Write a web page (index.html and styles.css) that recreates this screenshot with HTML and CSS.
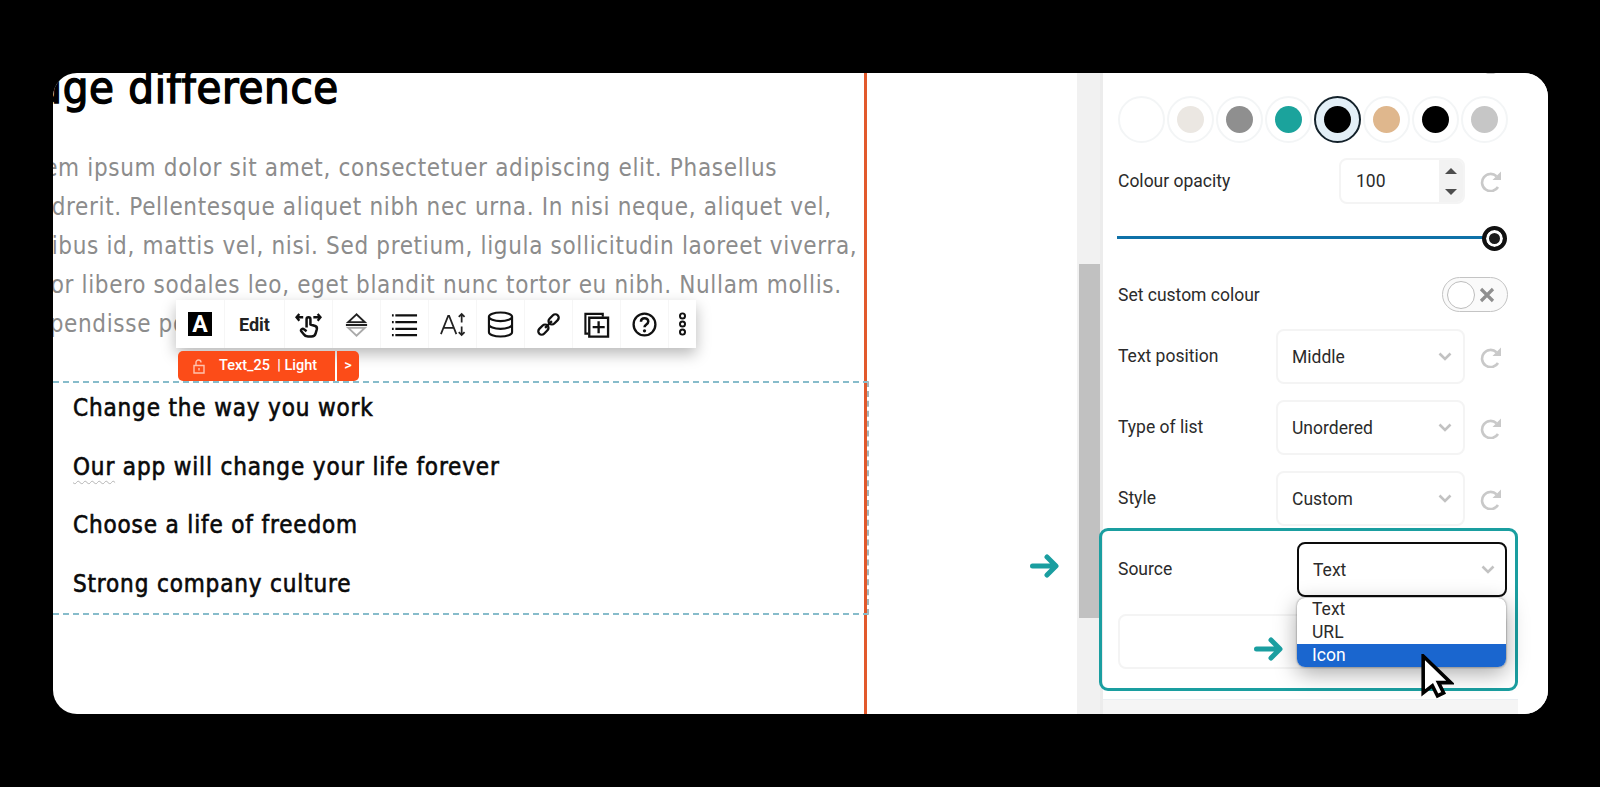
FILE: index.html
```html
<!DOCTYPE html>
<html lang="en">
<head>
    <meta charset="UTF-8">
    <title>Text list settings</title>
    <link rel="stylesheet" href="styles.css">
</head>
<body>
    <svg class="defs" width="0" height="0">
        <symbol id="reset" viewBox="0 0 22 22">
            <path d="M16.5 6.2A8.6 8.6 0 1 0 18 17" fill="none" stroke="currentColor" stroke-width="2.6"/>
            <path d="M21 1.5V10h-8.5z" fill="currentColor"/>
        </symbol>
        <symbol id="chevron" viewBox="0 0 14 9">
            <path d="M1.5 1.5L7 7l5.5-5.5" fill="none" stroke="currentColor" stroke-width="2.6"/>
        </symbol>
        <symbol id="arrow" viewBox="0 0 30 24">
            <path d="M2.5 12h23M17 3l9 9-9 9" fill="none" stroke="currentColor" stroke-width="5" stroke-linecap="round" stroke-linejoin="round"/>
        </symbol>
    </svg>

    <div class="frame">
        <main class="canvas">
            <div class="page">
                <h1>Make a huge difference</h1>
                <p class="lede">
                    <span>Lorem ipsum dolor sit amet, consectetuer adipiscing elit. Phasellus</span>
                    <span>hendrerit. Pellentesque aliquet nibh nec urna. In nisi neque, aliquet vel,</span>
                    <span>dapibus id, mattis vel, nisi. Sed pretium, ligula sollicitudin laoreet viverra,</span>
                    <span>tortor libero sodales leo, eget blandit nunc tortor eu nibh. Nullam mollis.</span>
                    <span>Suspendisse porttitor</span>
                </p>
                <ul class="benefits">
                    <li>Change the way you work</li>
                    <li><span class="typo">Our</span> app will change your life forever</li>
                    <li>Choose a life of freedom</li>
                    <li>Strong company culture</li>
                </ul>
            </div>
        </main>

        <div class="scrollbar"><div class="thumb"></div></div>

        <aside class="panel">
            <div class="clipped-reset"><svg class="reset"><use href="#reset"/></svg></div>
            <div class="swatches">
                <span class="swatch"></span>
                <span class="swatch"><i class="c-sand"></i></span>
                <span class="swatch"><i class="c-gray"></i></span>
                <span class="swatch"><i class="c-teal"></i></span>
                <span class="swatch active"><i class="c-black"></i></span>
                <span class="swatch"><i class="c-tan"></i></span>
                <span class="swatch"><i class="c-black"></i></span>
                <span class="swatch"><i class="c-silver"></i></span>
            </div>

            <div class="row opacity-row">
                <label>Colour opacity</label>
                <div class="number">
                    <span class="number-value">100</span>
                    <span class="stepper"><b class="up"></b><b class="down"></b></span>
                </div>
                <svg class="reset"><use href="#reset"/></svg>
            </div>

            <div class="slider"><span class="knob"></span></div>

            <div class="toggle-row">
                <label>Set custom colour</label>
                <div class="toggle">
                    <span class="toggle-dot"></span>
                    <svg class="toggle-x" viewBox="0 0 16 16"><path d="M2 2l12 12M14 2L2 14" stroke="currentColor" stroke-width="3.2" fill="none"/></svg>
                </div>
            </div>

            <div class="row select-row">
                <label>Text position</label>
                <div class="select"><span>Middle</span><svg class="chevron"><use href="#chevron"/></svg></div>
                <svg class="reset"><use href="#reset"/></svg>
            </div>
            <div class="row select-row">
                <label>Type of list</label>
                <div class="select"><span>Unordered</span><svg class="chevron"><use href="#chevron"/></svg></div>
                <svg class="reset"><use href="#reset"/></svg>
            </div>
            <div class="row select-row">
                <label>Style</label>
                <div class="select"><span>Custom</span><svg class="chevron"><use href="#chevron"/></svg></div>
                <svg class="reset"><use href="#reset"/></svg>
            </div>

            <section class="source-box">
                <div class="source-row">
                    <label>Source</label>
                    <div class="select focused"><span>Text</span><svg class="chevron"><use href="#chevron"/></svg></div>
                </div>
                <div class="source-input"></div>
                <ul class="dropdown">
                    <li>Text</li>
                    <li>URL</li>
                    <li class="hover">Icon</li>
                </ul>
            </section>
            <div class="panel-foot"></div>
        </aside>

        <!-- floating toolbar over the text -->
        <div class="toolbar">
            <div class="tool tool-style"><span class="style-a">A</span></div>
            <div class="tool tool-edit">Edit</div>
            <div class="tool">
                <svg viewBox="0 0 28 28" class="ico"><path d="M1.500 6.500h7M4.500 3L1.500 6.500 4.500 10M19 6.500h7.500M23.500 3l3 3.500-3 3.500" fill="none" stroke="#111" stroke-width="2.400"/><path d="M12 17V8.500a2 2 0 0 1 4 0V14l5 1.600c1.600.6 2 1.800 1.600 3.400l-1.200 4.200c-.5 2-2 3.300-4.400 3.300h-3.500c-2 0-3.400-.8-4.400-2.400L6.500 21c-1-1.800 1.300-3.300 2.800-2l2.700 2" fill="none" stroke="#111" stroke-width="2.600" stroke-linejoin="round"/></svg>
            </div>
            <div class="tool">
                <svg viewBox="0 0 28 28" class="ico"><path d="M14 3.500L5.500 11.500h17z" fill="none" stroke="#222" stroke-width="2"/><path d="M3 14.500h22" stroke="#222" stroke-width="2.200"/><path d="M5.500 17.500L14 25.500l8.500-8z" fill="none" stroke="#aaa" stroke-width="2"/></svg>
            </div>
            <div class="tool">
                <svg viewBox="0 0 28 28" class="ico"><path d="M4.500 4.500H27M4.500 11.500H27M4.500 18.500H27M4.500 25H27" stroke="#111" stroke-width="2.200"/><path d="M1 4.500h1.800M1 11.500h1.800M1 18.500h1.800M1 25h1.800" stroke="#111" stroke-width="2.200"/></svg>
            </div>
            <div class="tool">
                <svg viewBox="0 0 28 28" class="ico"><path d="M2 24L9.500 5h1l7.500 19M5 17.500h10" fill="none" stroke="#222" stroke-width="1.800"/><path d="M23.500 12V3M20.500 6l3-3 3 3M23.500 16v9M20.500 22l3 3 3-3" fill="none" stroke="#222" stroke-width="1.800"/></svg>
            </div>
            <div class="tool">
                <svg viewBox="0 0 28 28" class="ico"><ellipse cx="14" cy="6" rx="12" ry="4.500" fill="none" stroke="#111" stroke-width="2.200"/><path d="M2 6v16c0 2.500 5.400 4.500 12 4.500s12-2 12-4.500V6M2 14c0 2.500 5.400 4.500 12 4.500s12-2 12-4.500" fill="none" stroke="#111" stroke-width="2.200"/></svg>
            </div>
            <div class="tool">
                <svg viewBox="0 0 28 28" class="ico"><g fill="none" stroke="#111" stroke-width="2.400" transform="rotate(-45 14 14)"><rect x="0.500" y="10.500" width="12" height="7" rx="3.500"/><rect x="15.500" y="10.500" width="12" height="7" rx="3.500"/><path d="M9 14h10"/></g></svg>
            </div>
            <div class="tool">
                <svg viewBox="0 0 28 28" class="ico"><path d="M5.500 23.500H2.500V3h18v3" fill="none" stroke="#111" stroke-width="2.200"/><path d="M6.500 7h19.500v19.500H6.500z" fill="none" stroke="#111" stroke-width="2.400"/><path d="M16.200 10.500v12.500M10 16.700h12.500" stroke="#111" stroke-width="2.400"/></svg>
            </div>
            <div class="tool">
                <svg viewBox="0 0 28 28" class="ico"><circle cx="14" cy="14" r="11.300" fill="none" stroke="#111" stroke-width="2.400"/><path d="M10.300 11.200c0-5 7.600-5 7.600-.2 0 3-3.900 3-3.900 5.800" fill="none" stroke="#111" stroke-width="2.600"/><circle cx="14" cy="20.600" r="1.700" fill="#111"/></svg>
            </div>
            <div class="tool tool-more">
                <svg viewBox="0 0 10 28" class="dots"><g fill="none" stroke="#111" stroke-width="2.200"><circle cx="5" cy="5" r="2.800"/><circle cx="5" cy="14" r="2.800"/><circle cx="5" cy="23" r="2.800"/></g></svg>
            </div>
        </div>

        <div class="tag">
            <span class="tag-main">
                <svg class="lock" viewBox="0 0 12 15"><path d="M3 6.500V3.500a2.500 2.500 0 0 1 5 0M1 6.500h10v7.500H1zM6 9v2.500" fill="none" stroke="#ffc2ad" stroke-width="1.400"/></svg>
                <span>Text_25 &nbsp;| Light</span>
            </span>
            <span class="tag-next">&gt;</span>
        </div>

        <svg class="note-arrow arrow-source"><use href="#arrow"/></svg>
        <svg class="note-arrow arrow-icon"><use href="#arrow"/></svg>

        <svg class="cursor" viewBox="0 0 32 44"><path d="M2 2v36l9-7 5 10 6-3-5-10h12z" fill="#fff" stroke="#000" stroke-width="3.500" stroke-linejoin="miter"/></svg>
    </div>
</body>
</html>
```

FILE: styles.css
```css
html, body {
    margin: 0;
    height: 100%;
    background: #000;
    overflow: hidden;
}
body {
    padding: 73px 52px 73px 53px;
    box-sizing: border-box;
    font-family: 'Roboto', sans-serif;
    color: #2b2b2b;
}
.defs {
    position: absolute;
}
.frame {
    position: relative;
    display: flex;
    height: 641px;
    background: #fff;
    border-radius: 24px;
    overflow: hidden;
}

/* page being edited */
.canvas {
    width: 1024px;
    flex: none;
    overflow: hidden;
}
.page {
    display: flow-root;
    width: 814px;
    height: 100%;
    box-sizing: border-box;
    border-right: 3px solid #e2592c;
    font-family: 'DejaVu Sans', sans-serif;
    font-stretch: condensed;
}
h1 {
    margin: -17px 0 0 -205px;
    font-size: 45px;
    line-height: 64px;
    font-weight: 400;
    letter-spacing: .7px;
    -webkit-text-stroke: 1.4px #000;
    color: #000;
    white-space: nowrap;
}
.lede {
    margin: 29px 0 0 -44px;
    font-size: 24px;
    line-height: 39px;
    letter-spacing: .66px;
    color: #8c8c8c;
    white-space: nowrap;
}
.lede span {
    display: block;
}
.benefits {
    list-style: none;
    margin: 37px 0 0;
    padding: 0 0 0 20px;
    height: 234px;
    width: 816px;
    box-sizing: border-box;
    border-top: 2px dashed #87bccb;
    border-bottom: 2px dashed #87bccb;
    border-right: 2px dashed #a5b5ba;
    font-size: 24px;
    font-weight: 400;
    letter-spacing: .85px;
    -webkit-text-stroke: .6px #0a0a0a;
    color: #0a0a0a;
}
.benefits li {
    height: 58.500px;
    line-height: 50px;
    white-space: nowrap;
}
.typo {
    text-decoration: underline wavy #b5b5b5 1px;
    text-underline-offset: 5px;
}

.scrollbar {
    width: 23px;
    flex: none;
    background: #f1f1f1;
}
.thumb {
    height: 354px;
    margin: 191px 0 0 2px;
    background: #c1c1c1;
}

/* settings panel */
.panel {
    position: relative;
    flex: 1;
    border-left: 3px solid #ececec;
    padding: 0 0 0 15px;
    font-size: 17.500px;
    background: #fff;
}
label {
    display: block;
    color: #2b2b2b;
}
.clipped-reset {
    height: 23px;
    margin-top: -21px;
    padding-left: 362px;
    color: #c9c9c9;
}
.reset {
    width: 22px;
    height: 22px;
    color: #c9c9c9;
    flex: none;
}
.swatches {
    display: flex;
    gap: 2px;
    margin: 21px 0 0 0;
}
.swatch {
    width: 47px;
    height: 47px;
    box-sizing: border-box;
    border: 2px solid #f3f5f6;
    border-radius: 50%;
    display: flex;
    align-items: center;
    justify-content: center;
}
.swatch i {
    width: 27px;
    height: 27px;
    border-radius: 50%;
}
.swatch.active {
    background: #e3eff7;
    border-color: #14222b;
}
.c-sand { background: #ebe7e2; }
.c-gray { background: #8f8f8f; }
.c-teal { background: #1ba39c; }
.c-black { background: #000; }
.c-tan { background: #dfb78d; }
.c-silver { background: #c6c6c6; }

.row {
    display: flex;
    align-items: center;
}
.row label {
    width: 158px;
}
.opacity-row {
    margin-top: 15px;
    height: 46px;
}
.opacity-row label {
    width: 221px;
}
.number {
    width: 126px;
    height: 46px;
    box-sizing: border-box;
    border: 2px solid #f4f4f4;
    border-radius: 8px;
    display: flex;
    overflow: hidden;
    margin-right: 15px;
}
.number-value {
    flex: 1;
    padding-left: 15px;
    line-height: 42px;
}
.stepper {
    width: 24px;
    background: #f2f2f2;
    display: flex;
    flex-direction: column;
    align-items: center;
    justify-content: center;
    gap: 15px;
}
.stepper b {
    width: 0;
    height: 0;
    border-left: 6px solid transparent;
    border-right: 6px solid transparent;
}
.stepper .up { border-bottom: 6px solid #4d4d4d; }
.stepper .down { border-top: 6px solid #4d4d4d; }

.slider {
    position: relative;
    width: 378px;
    height: 3px;
    margin: 32px 0 0 -1px;
    background: #0f71a8;
}
.knob {
    position: absolute;
    right: -12px;
    top: -10px;
    width: 25px;
    height: 25px;
    box-sizing: border-box;
    background: #1c1c1c;
    border: 4px solid #111;
    box-shadow: inset 0 0 0 3px #fff;
    border-radius: 50%;
}

.toggle-row {
    display: flex;
    justify-content: space-between;
    align-items: center;
    margin-top: 38px;
    width: 390px;
}
.toggle {
    width: 66px;
    height: 35px;
    box-sizing: border-box;
    border: 1px solid #c4c4c4;
    border-radius: 18px;
    display: flex;
    align-items: center;
    padding-left: 4px;
    background: #fafafa;
}
.toggle-dot {
    width: 26px;
    height: 26px;
    border-radius: 50%;
    border: 1px solid #bdbdbd;
    background: #fff;
}
.toggle-x {
    width: 16px;
    height: 16px;
    margin-left: 4px;
    color: #8f8f8f;
}

.select {
    width: 189px;
    height: 55px;
    box-sizing: border-box;
    border: 2px solid #f4f4f4;
    border-radius: 8px;
    padding: 0 11px 0 14px;
    display: flex;
    align-items: center;
    justify-content: space-between;
    margin-right: 15px;
    flex: none;
}
.chevron {
    width: 14px;
    height: 9px;
    color: #c2c2c2;
}
.select-row {
    height: 55px;
    margin-top: 16px;
}
.select-row label {
    margin-top: -1px;
}
.toggle-row + .select-row {
    margin-top: 17px;
}

.source-box {
    position: relative;
    width: 419px;
    height: 163px;
    box-sizing: border-box;
    margin: 2px 0 0 -19px;
    border: 3px solid #1a9ea0;
    border-radius: 9px;
    padding: 11px 8px 0 16px;
}
.source-row {
    display: flex;
    justify-content: space-between;
    align-items: center;
}
.source-row label {
    margin-top: -2px;
}
.select.focused {
    width: 210px;
    margin: 0;
    border-color: #0c0c0c;
    padding-right: 10px;
}
.source-input {
    height: 55px;
    margin-top: 17px;
    border: 2px solid #f4f4f4;
    box-sizing: border-box;
    border-radius: 8px;
}
.dropdown {
    position: absolute;
    z-index: 2;
    top: 67px;
    right: 9px;
    width: 209px;
    margin: 0;
    padding: 0;
    list-style: none;
    background: #fff;
    border-radius: 8px;
    overflow: hidden;
    box-shadow: 0 0 2px rgba(0, 0, 0, .5), 0 6px 22px rgba(0, 0, 0, .35);
}
.dropdown li {
    height: 23px;
    line-height: 23px;
    padding-left: 15px;
    box-sizing: border-box;
}
.dropdown .hover {
    background: #1a66cf;
    color: #fff;
}
.panel-foot {
    position: absolute;
    left: 0;
    right: 30px;
    bottom: 0;
    height: 14px;
    background: #f5f5f5;
    border-top: 1px solid #ebeff3;
}

/* toolbar and element tag */
.toolbar {
    position: absolute;
    left: 123px;
    top: 227px;
    height: 48px;
    display: flex;
    background: #fff;
    box-shadow: 0 6px 14px rgba(0, 0, 0, .28);
    z-index: 3;
}
.tool {
    width: 48px;
    display: flex;
    align-items: center;
    justify-content: center;
    border-right: 1px solid #f6f6f6;
    box-sizing: border-box;
}
.tool-style {
    width: 49px;
}
.tool-edit {
    width: 60px;
    font-size: 18px;
    font-weight: 700;
    color: #222;
}
.tool-more {
    width: 27px;
    border-right: 0;
}
.style-a {
    width: 24px;
    height: 24px;
    background: #000;
    color: #fff;
    font: 700 23px/25px 'Roboto', sans-serif;
    text-align: center;
}
.ico {
    width: 27px;
    height: 27px;
}
.dots {
    width: 9px;
    height: 26px;
}
.tag {
    position: absolute;
    left: 125px;
    top: 278px;
    height: 30px;
    display: flex;
    color: #fff;
    font-size: 14.500px;
    font-weight: 500;
    line-height: 30px;
    z-index: 3;
}
.tag-main {
    width: 157px;
    background: #fc4c18;
    border-radius: 5px 0 0 5px;
    display: flex;
    align-items: center;
    padding-left: 15px;
    box-sizing: border-box;
    white-space: nowrap;
}
.lock {
    width: 12px;
    height: 15px;
    margin-right: 14px;
}
.tag-next {
    width: 22px;
    margin-left: 2px;
    background: #fc4c18;
    border-radius: 0 5px 5px 0;
    text-align: center;
}
.note-arrow {
    position: absolute;
    width: 30px;
    height: 24px;
    color: #1a9ea0;
    z-index: 4;
}
.arrow-source {
    left: 977px;
    top: 481px;
}
.arrow-icon {
    left: 1201px;
    top: 564px;
}
.cursor {
    position: absolute;
    left: 1368px;
    top: 581px;
    width: 33px;
    height: 45px;
    z-index: 5;
}
```
